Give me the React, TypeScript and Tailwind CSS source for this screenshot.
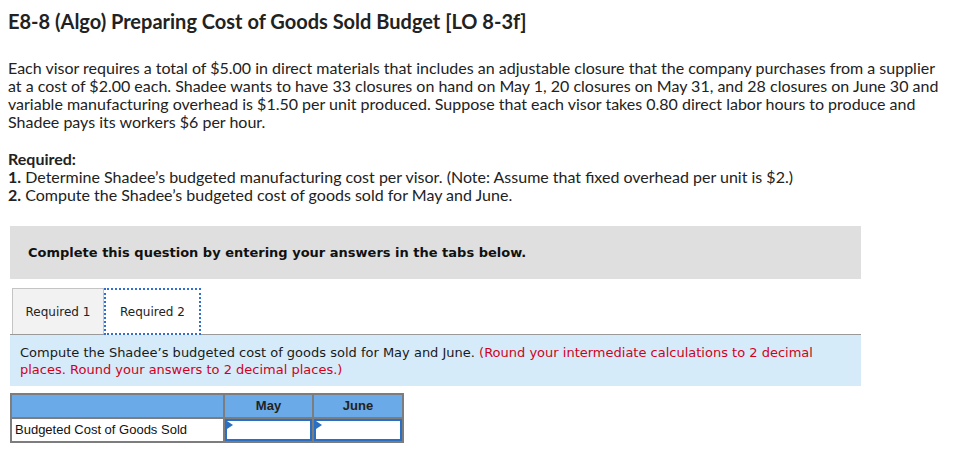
const App = () => {
  return (
    <div className="w-[976px] h-[457px] bg-white text-[#1a1a1a] overflow-hidden">
      <div className="px-2 pt-[9px] font-['Lato','Open_Sans',sans-serif]">
        <h1 className="text-[20px] font-bold leading-[24px] text-[#222]">
          E8-8 (Algo) Preparing Cost of Goods Sold Budget [LO 8-3f]
        </h1>

        <p className="mt-[26px] text-[16px] leading-[18px] text-[#222]">
          Each visor requires a total of $5.00 in direct materials that includes an adjustable closure that the company purchases from a supplier
          <br />
          at a cost of $2.00 each. Shadee wants to have 33 closures on hand on May 1, 20 closures on May 31, and 28 closures on June 30 and
          <br />
          variable manufacturing overhead is $1.50 per unit produced. Suppose that each visor takes 0.80 direct labor hours to produce and
          <br />
          Shadee pays its workers $6 per hour.
        </p>

        <div className="mt-[19px] text-[16px] leading-[18px] text-[#222]">
          <div className="font-bold">Required:</div>
          <div>
            <span className="font-bold">1.</span> Determine Shadee’s budgeted manufacturing cost per visor. (Note: Assume that fixed overhead per unit is $2.)
          </div>
          <div>
            <span className="font-bold">2.</span> Compute the Shadee’s budgeted cost of goods sold for May and June.
          </div>
        </div>
      </div>

      <div className="ml-[10px] w-[851px] font-['DejaVu_Sans','Verdana',sans-serif]">
        <div className="mt-[22px] h-[53px] bg-[#dfdfdf] flex items-center pl-[18px]">
          <span className="text-[13px] font-bold text-[#111]">
            Complete this question by entering your answers in the tabs below.
          </span>
        </div>

        <div className="mt-[9px] flex items-end border-b border-[#9a9a9a] pl-[2px]">
          <div className="h-[46px] w-[92px] flex items-center justify-center bg-[#f2f2f2] border border-b-0 border-[#c4c4c4] text-[12px] text-[#222]">
            Required 1
          </div>
          <div className="h-[47px] w-[97px] flex items-center justify-center bg-white border-2 border-dotted border-[#2f6fd1] -mb-px text-[12px] text-[#222]">
            Required 2
          </div>
        </div>

        <div className="h-[51px] bg-[#d5ebf9] px-[10px] pt-[9px] text-[13px] leading-[17px] text-[#1a1a1a]">
          Compute the Shadee’s budgeted cost of goods sold for May and June.{" "}
          <span className="text-[#d0021b]">
            (Round your intermediate calculations to 2 decimal places. Round your answers to 2 decimal places.)
          </span>
        </div>
      </div>

      <table className="ml-[10px] mt-[7px] border-collapse font-['Liberation_Sans','Arial',sans-serif] text-[13px]">
        <thead>
          <tr className="bg-[#6aaae8] h-[24px]">
            <th className="w-[213px] border-2 border-[#7d7d7d]"></th>
            <th className="w-[89px] border-2 border-[#7d7d7d] font-bold text-[#222]">May</th>
            <th className="w-[90px] border-2 border-[#7d7d7d] font-bold text-[#222]">June</th>
          </tr>
        </thead>
        <tbody>
          <tr className="h-[24px]">
            <td className="border-2 border-[#7d7d7d] pl-[3px] text-[#111]">Budgeted Cost of Goods Sold</td>
            <td className="border-2 border-[#7d7d7d] p-0">
              <div className="relative h-[22px] border-2 border-[#2a6fc1] bg-white">
                <span className="absolute left-0 top-0 w-0 h-0 border-t-[4px] border-b-[4px] border-l-[6px] border-t-transparent border-b-transparent border-l-[#2a6fc1]" />
              </div>
            </td>
            <td className="border-2 border-[#7d7d7d] p-0">
              <div className="relative h-[22px] border-2 border-[#2a6fc1] bg-white">
                <span className="absolute left-0 top-0 w-0 h-0 border-t-[4px] border-b-[4px] border-l-[6px] border-t-transparent border-b-transparent border-l-[#2a6fc1]" />
              </div>
            </td>
          </tr>
        </tbody>
      </table>
    </div>
  )
}

export default App
